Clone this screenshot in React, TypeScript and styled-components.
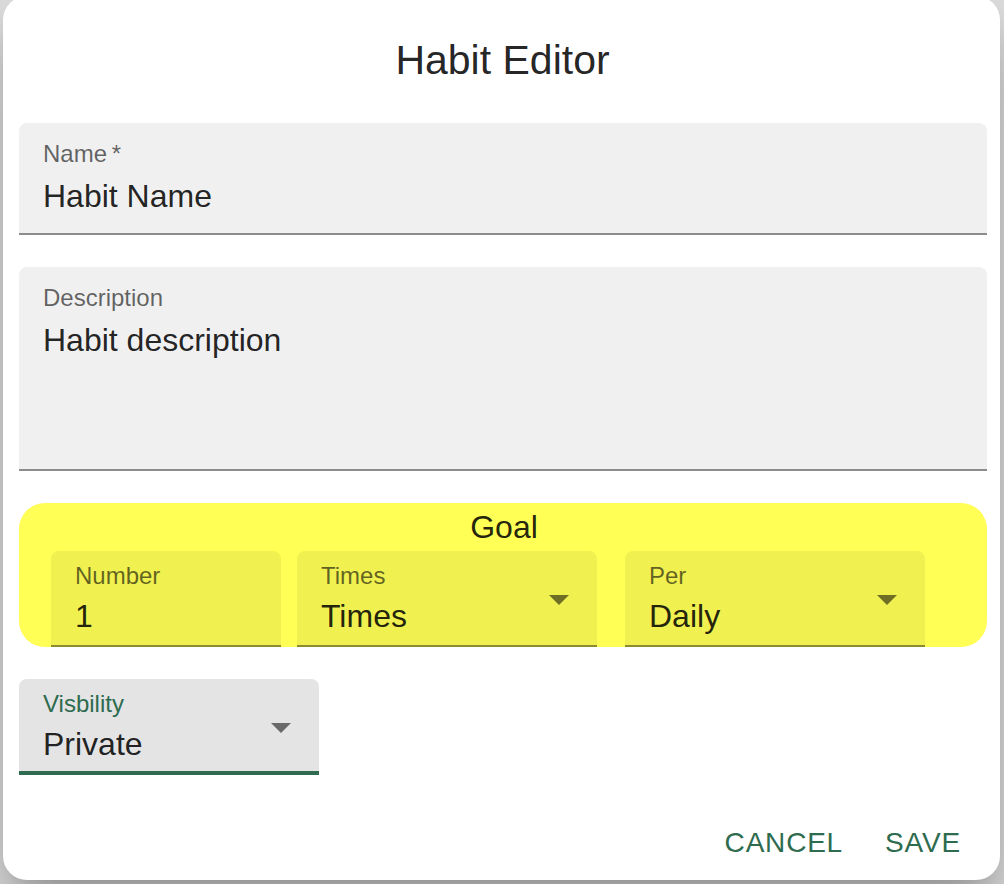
import React from "react";
import styled, { createGlobalStyle } from "styled-components";

const GREEN = "#2e6b4f";

const Global = createGlobalStyle`
  html, body {
    margin: 0;
    padding: 0;
    background: #e4e4e4;
    overflow: hidden;
  }
  body {
    font-family: "Liberation Sans", Arial, Helvetica, sans-serif;
    color: rgba(0, 0, 0, 0.87);
  }
`;

const Page = styled.div`
  width: 1004px;
  height: 884px;
  padding-left: 3px;
  box-sizing: border-box;
  overflow: hidden;
`;

const Dialog = styled.div`
  width: 997px;
  height: 884px;
  margin-top: -4px;
  padding-top: 32px;
  box-sizing: border-box;
  background: #ffffff;
  border-radius: 24px;
  box-shadow: 0 22px 30px -14px rgba(0, 0, 0, 0.2),
    0 48px 76px 6px rgba(0, 0, 0, 0.14), 0 18px 92px 16px rgba(0, 0, 0, 0.12);
  display: flex;
  flex-direction: column;
`;

const Title = styled.h2`
  margin: 0;
  height: 64px;
  line-height: 64px;
  font-size: 41px;
  font-weight: 400;
  text-align: center;
  padding-left: 2px;
`;

const Content = styled.div`
  margin-top: 31px;
  padding: 0 16px;
  display: flex;
  flex-direction: column;
  gap: 32px;
`;

const Field = styled.div<{
  $width?: number;
  $small?: boolean;
  $bg?: string;
  $line?: string;
  $thick?: number;
  $select?: boolean;
}>`
  width: ${(p) => (p.$width ? `${p.$width}px` : "968px")};
  box-sizing: border-box;
  display: flex;
  align-items: center;
  background: ${(p) => p.$bg ?? "rgba(0, 0, 0, 0.06)"};
  border-top-left-radius: 8px;
  border-top-right-radius: 8px;
  border-bottom: ${(p) => p.$thick ?? 2}px solid ${(p) => p.$line ?? "rgba(0, 0, 0, 0.42)"};
  padding: ${(p) => (p.$small ? 8 : 14)}px ${(p) => (p.$select ? 14 : 24)}px
    ${(p) => (p.$small ? 8 - (p.$thick ?? 2) : 14)}px 24px;
`;

const FieldBody = styled.div`
  flex: 1;
  display: flex;
  flex-direction: column;
  min-width: 0;
`;

const Label = styled.div<{ $color?: string }>`
  font-size: 24px;
  line-height: 34px;
  color: ${(p) => p.$color ?? "rgba(0, 0, 0, 0.6)"};
  white-space: nowrap;
`;

const Value = styled.div<{ $small?: boolean; $lines?: number }>`
  margin-top: ${(p) => (p.$small ? 0 : 2)}px;
  font-size: 32px;
  line-height: 46px;
  height: ${(p) => (p.$lines ?? 1) * 46}px;
  color: rgba(0, 0, 0, 0.87);
  white-space: nowrap;
`;

const Arrow = styled.svg`
  width: 48px;
  height: 48px;
  flex: none;
  fill: rgba(0, 0, 0, 0.54);
`;

const GoalBox = styled.div`
  width: 968px;
  height: 144px;
  box-sizing: border-box;
  background: #ffff55;
  border-radius: 26px;
  display: flex;
  flex-direction: column;
`;

const GoalTitle = styled.div`
  height: 48px;
  line-height: 48px;
  font-size: 32px;
  text-align: center;
  padding-left: 2px;
`;

const GoalRow = styled.div`
  display: flex;
  padding-left: 32px;
`;

const Spacer = styled.div<{ $w: number }>`
  width: ${(p) => p.$w}px;
  flex: none;
`;

const Actions = styled.div`
  margin-top: 32px;
  display: flex;
  justify-content: flex-end;
  padding-right: 13px;
`;

const TextButton = styled.button`
  height: 72px;
  min-width: 128px;
  padding: 0 16px;
  border: none;
  background: transparent;
  font-family: inherit;
  font-size: 28px;
  line-height: 72px;
  letter-spacing: 0.8px;
  text-transform: uppercase;
  color: ${GREEN};
  cursor: pointer;
`;

const DropArrow = () => (
  <Arrow viewBox="0 0 24 24">
    <path d="M7 10l5 5 5-5z" />
  </Arrow>
);

export default function App() {
  return (
    <Page>
      <Global />
      <Dialog>
        <Title>Habit Editor</Title>
        <Content>
          <Field>
            <FieldBody>
              <Label>Name{"\u2009"}*</Label>
              <Value>Habit Name</Value>
            </FieldBody>
          </Field>
          <Field>
            <FieldBody>
              <Label>Description</Label>
              <Value $lines={3}>Habit description</Value>
            </FieldBody>
          </Field>
          <GoalBox>
            <GoalTitle>Goal</GoalTitle>
            <GoalRow>
              <Field $small $width={230}>
                <FieldBody>
                  <Label>Number</Label>
                  <Value $small>1</Value>
                </FieldBody>
              </Field>
              <Spacer $w={16} />
              <Field $small $select $width={300}>
                <FieldBody>
                  <Label>Times</Label>
                  <Value $small>Times</Value>
                </FieldBody>
                <DropArrow />
              </Field>
              <Spacer $w={28} />
              <Field $small $select $width={300}>
                <FieldBody>
                  <Label>Per</Label>
                  <Value $small>Daily</Value>
                </FieldBody>
                <DropArrow />
              </Field>
            </GoalRow>
          </GoalBox>
          <Field
            $small
            $select
            $width={300}
            $bg="#e4e4e4"
            $line={GREEN}
            $thick={4}
          >
            <FieldBody>
              <Label $color={GREEN}>Visbility</Label>
              <Value $small>Private</Value>
            </FieldBody>
            <DropArrow />
          </Field>
        </Content>
        <Actions>
          <TextButton>Cancel</TextButton>
          <TextButton>Save</TextButton>
        </Actions>
      </Dialog>
    </Page>
  );
}
